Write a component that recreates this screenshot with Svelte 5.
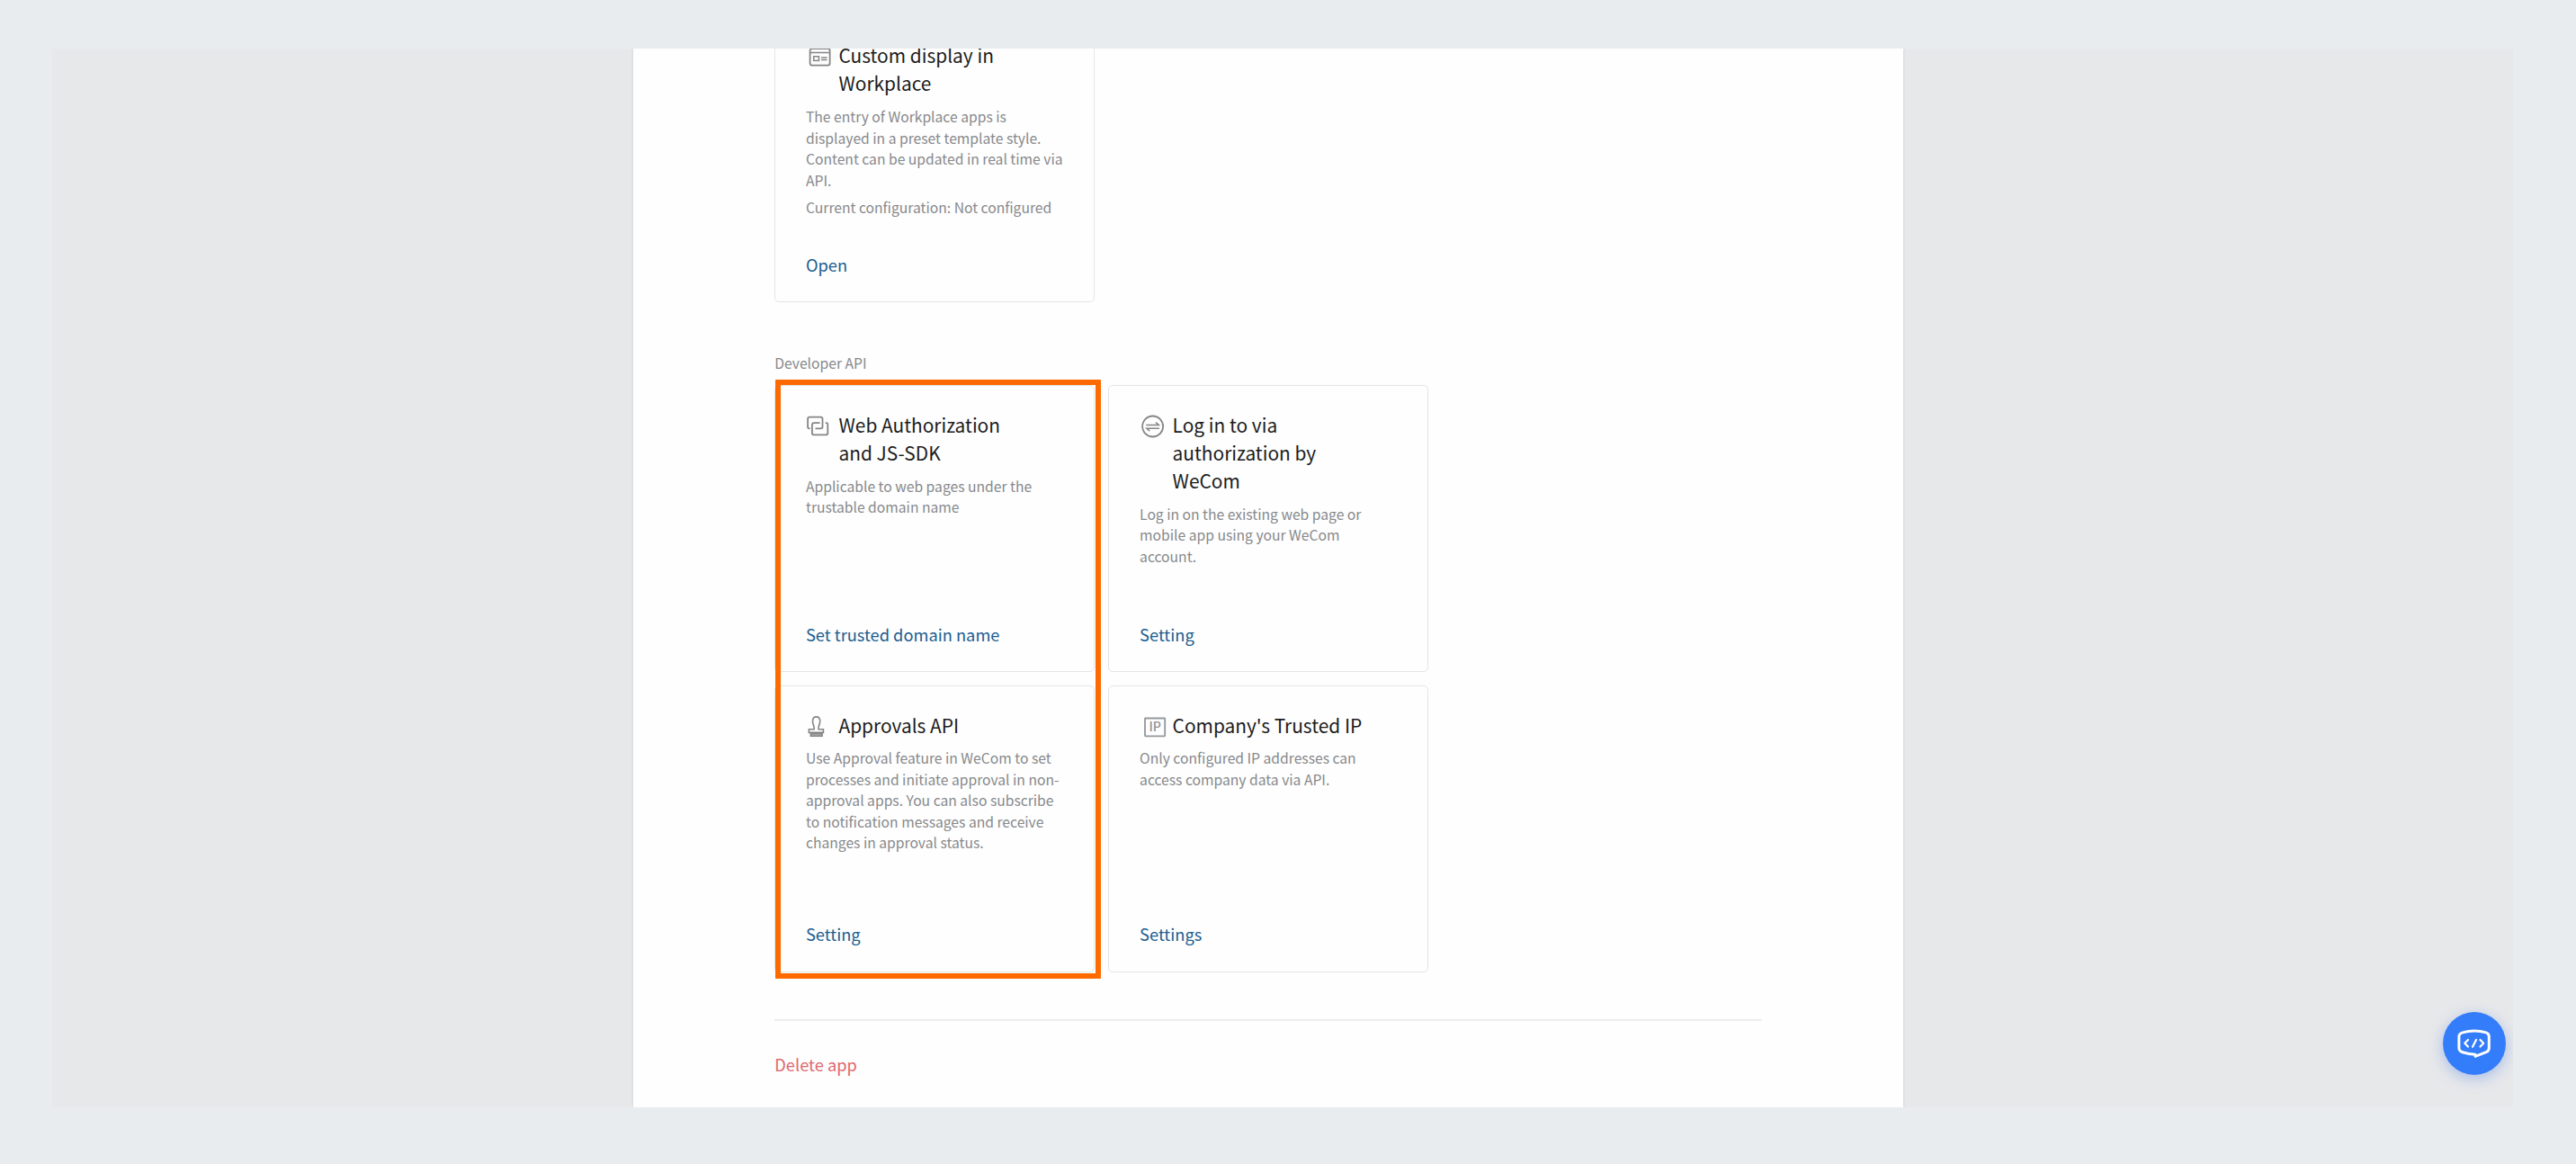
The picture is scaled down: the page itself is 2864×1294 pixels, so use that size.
<script>
  const developerCards = [
    {
      icon: 'link',
      title: ['Web Authorization', 'and JS-SDK'],
      desc: ['Applicable to web pages under the', 'trustable domain name'],
      action: 'Set trusted domain name'
    },
    {
      icon: 'swap',
      title: ['Log in to via', 'authorization by', 'WeCom'],
      desc: ['Log in on the existing web page or', 'mobile app using your WeCom', 'account.'],
      action: 'Setting'
    },
    {
      icon: 'stamp',
      title: ['Approvals API'],
      desc: [
        'Use Approval feature in WeCom to set',
        'processes and initiate approval in non-',
        'approval apps. You can also subscribe',
        'to notification messages and receive',
        'changes in approval status.'
      ],
      action: 'Setting'
    },
    {
      icon: 'ip',
      title: ["Company's Trusted IP"],
      desc: ['Only configured IP addresses can', 'access company data via API.'],
      action: 'Settings'
    }
  ];
  const workplaceCard = {
    icon: 'window',
    title: ['Custom display in', 'Workplace'],
    desc: [
      'The entry of Workplace apps is',
      'displayed in a preset template style.',
      'Content can be updated in real time via',
      'API.'
    ],
    status: 'Current configuration: Not configured',
    action: 'Open'
  };
</script>

{#snippet icon(name)}
  <svg class="icon" width="28" height="28" viewBox="0 0 28 28" fill="none" stroke="#858587" stroke-width="1.8">
    {#if name === 'window'}
      <rect x="4.6" y="7" width="22" height="18.6" rx="2" />
      <path d="M5 11.600H26.500M17 16.900H23.500M17 19.600H23.500" stroke-width="1.500" />
      <rect x="8.700" y="15.800" width="5.800" height="4.600" stroke-width="1.500" />
    {:else if name === 'link'}
      <path d="M4.700 18.400H4A1.900 1.900 0 0 1 2.100 16.500V7.600A1.900 1.900 0 0 1 4 5.700H16.600A1.900 1.900 0 0 1 18.500 7.600V16.500A1.900 1.900 0 0 1 16.600 18.400H10.500" />
      <path d="M15.600 12.200H8.800A1.900 1.900 0 0 0 6.900 14.100V23.400A1.900 1.900 0 0 0 8.800 25.300H22.400A1.900 1.900 0 0 0 24.300 23.400V14.100A1.900 1.900 0 0 0 22.400 12.200H21.800" />
    {:else if name === 'swap'}
      <circle cx="14.600" cy="16" r="11.500" />
      <path d="M7.300 14.500H21.300L18 11.600M21.900 18.200H7.900L11.200 21.100" stroke-width="1.500" />
    {:else if name === 'stamp'}
      <path d="M9.200 18.700C9.600 15 7.500 13.300 7.500 9.800C7.500 6.800 9.200 4.900 11.600 4.900S15.700 6.800 15.700 9.800C15.700 13.300 13.600 15 14 18.700H19.400V22.400H3.400V18.700Z" stroke-width="1.600" />
      <rect x="5.300" y="23.200" width="12.800" height="3.200" fill="#a3a3a5" stroke-width="1.400" />
    {:else}
      <rect x="6" y="6.500" width="22.200" height="19.800" rx="0.500" stroke="#94979b" />
      <text x="10.500" y="21.300">IP</text>
    {/if}
  </svg>
{/snippet}

{#snippet card(item)}
  <article class="card">
    <header class="head">
      {@render icon(item.icon)}
      <h3>{#each item.title as line}<span>{line}</span>{/each}</h3>
    </header>
    <p class="desc">{#each item.desc as line}<span>{line}</span>{/each}</p>
    {#if item.status}<p class="desc status">{item.status}</p>{/if}
    <a class="action">{item.action}</a>
  </article>
{/snippet}

<div class="page">
  <div class="window">
    <main class="panel">
      <section class="cards first">{@render card(workplaceCard)}</section>
      <h2>Developer API</h2>
      <section class="cards developer">
        {#each developerCards as item}{@render card(item)}{/each}
        <div class="highlight"></div>
      </section>
      <hr />
      <a class="delete">Delete app</a>
    </main>
    <button class="fab" aria-label="Developer help">
      <svg width="70" height="70" viewBox="0 0 70 70" fill="none" stroke="#fff" stroke-linecap="round" stroke-linejoin="round">
        <path d="M35 21C40 21 44 21.700 48 22.900Q51.300 24 51.300 27.500V40Q51.300 43.500 48 44.700L36 49.300V47.300C30 47 26 46 22 44.700Q17.900 43.500 17.900 40V27.500Q17.900 24 22 22.900C26 21.700 30 21 35 21Z" stroke-width="3" />
        <path d="M28 31L24.300 34.800L28 38.500M37 31L33 38.700M41.500 31L45.200 34.800L41.500 38.500" stroke-width="2.200" />
      </svg>
    </button>
  </div>
</div>

<style>
  :global(body) { margin: 0; }
  .page {
    box-sizing: border-box;
    width: 2864px;
    height: 1294px;
    padding: 54px 70px 63px 58px;
    background: #e8ecef;
    font-family: "Noto Sans CJK SC", sans-serif;
  }
  .window {
    position: relative;
    height: 1177px;
    overflow: hidden;
    background: #e7e8ea;
  }
  .panel {
    box-sizing: border-box;
    width: 1412px;
    height: 1177px;
    margin-left: 646px;
    padding-left: 157.300px;
    background: #fefefe;
    box-shadow: 0 0 3px rgba(0, 0, 0, 0.13);
    display: flex;
    flex-direction: column;
    align-items: flex-start;
  }
  .cards {
    position: relative;
    display: grid;
    grid-template-columns: 355.500px 355.500px;
    grid-auto-rows: 319px;
    gap: 14.600px 15.600px;
  }
  .first { margin-top: -36.600px; }
  .card {
    box-sizing: border-box;
    display: flex;
    flex-direction: column;
    align-items: flex-start;
    padding: 28px 0 27.600px 33.700px;
    border: 1px solid #e3e5e6;
    border-radius: 5px;
  }
  h2, h3, p { margin: 0; font-weight: 400; }
  h2 {
    height: 24px;
    margin: 55.900px 0 12px;
    font-size: 15.660px;
    line-height: 24px;
    color: #87888b;
  }
  .head { display: flex; gap: 8.500px; }
  .icon { flex: none; margin-top: 1px; overflow: visible; }
  .icon text { font: 500 14px "Noto Sans CJK SC", sans-serif; fill: #8f9296; stroke: none; }
  h3 { font-size: 20.880px; line-height: 31px; color: #1c1c1c; }
  h3 span, .desc span { display: block; white-space: nowrap; }
  .desc { margin-top: 9.600px; font-size: 15.660px; line-height: 23.500px; color: #87898c; white-space: nowrap; }
  .status { margin-top: 7px; }
  .action { margin-top: auto; font-size: 18.270px; line-height: 28px; color: #205d90; }
  .highlight {
    position: absolute;
    box-sizing: border-box;
    left: 1px;
    top: -6.500px;
    width: 362px;
    height: 666px;
    border: 6px solid #ff6a00;
    border-radius: 1px;
  }
  hr { width: 1098px; height: 2px; margin: 52.200px 0 0; border: 0; background: #ededee; }
  .delete { margin-top: 34px; font-size: 18.270px; line-height: 28px; color: #df686c; }
  .fab {
    position: absolute;
    right: 8.500px;
    bottom: 36px;
    width: 70px;
    height: 70px;
    padding: 0;
    border: 0;
    border-radius: 50%;
    background: #347dfa;
    box-shadow: 0 4px 16px rgba(52, 110, 230, 0.35);
  }
</style>
